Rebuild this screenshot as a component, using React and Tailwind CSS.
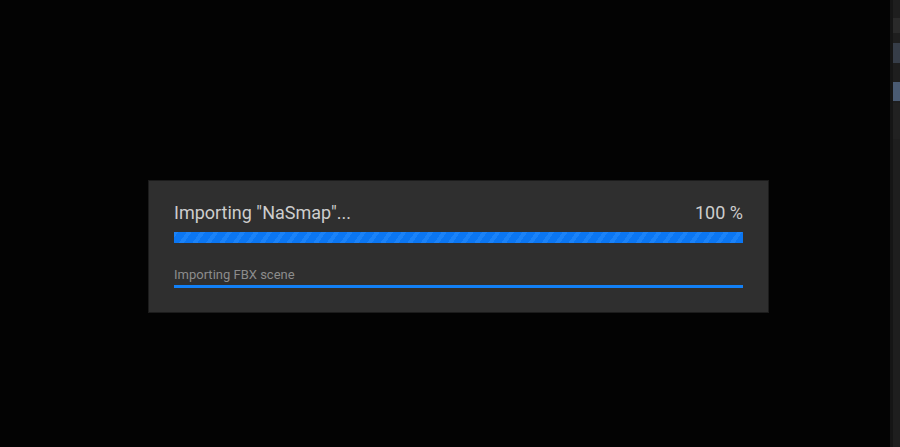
export default function App() {
  return (
    <div className="flex h-[447px] w-[900px] overflow-hidden bg-[#030303] font-['Roboto','Liberation_Sans',sans-serif]">
      <div className="flex-1 pl-[148px] pt-[180px]">
        <div className="w-[621px] border border-[#1c1c1c] bg-[#2f2f2f] px-[25px] pt-[20px] pb-[24px]">
          <div className="flex items-center justify-between text-[18px] leading-[24px] text-[#cdcdcd]">
            <span>Importing "NaSmap"...</span>
            <span>100 %</span>
          </div>
          <div className="mt-[7px] h-[11px] w-full bg-[#0b76f2] bg-[repeating-linear-gradient(-55deg,#0b76f2_0px,#0b76f2_7px,#1a82f8_7px,#1a82f8_11px)]" />
          <div className="mt-[24px] text-[13px] leading-[16px] text-[#8c8c8c]">Importing FBX scene</div>
          <div className="mt-[2px] h-[3px] w-full bg-[#1280f6]" />
        </div>
      </div>
      <div className="flex w-[10px] border-l-[3px] border-[#151515] bg-[#1e1e1e]">
        <div className="flex w-full flex-col">
          <div className="mt-[18px] h-[15px] bg-[#2a2a2a]" />
          <div className="mt-[10px] h-[20px] bg-[#363d48]" />
          <div className="mt-[19px] h-[19px] bg-[#4a5b73]" />
          <div className="mt-[2px] h-[36px] bg-[#212121]" />
        </div>
      </div>
    </div>
  );
}
